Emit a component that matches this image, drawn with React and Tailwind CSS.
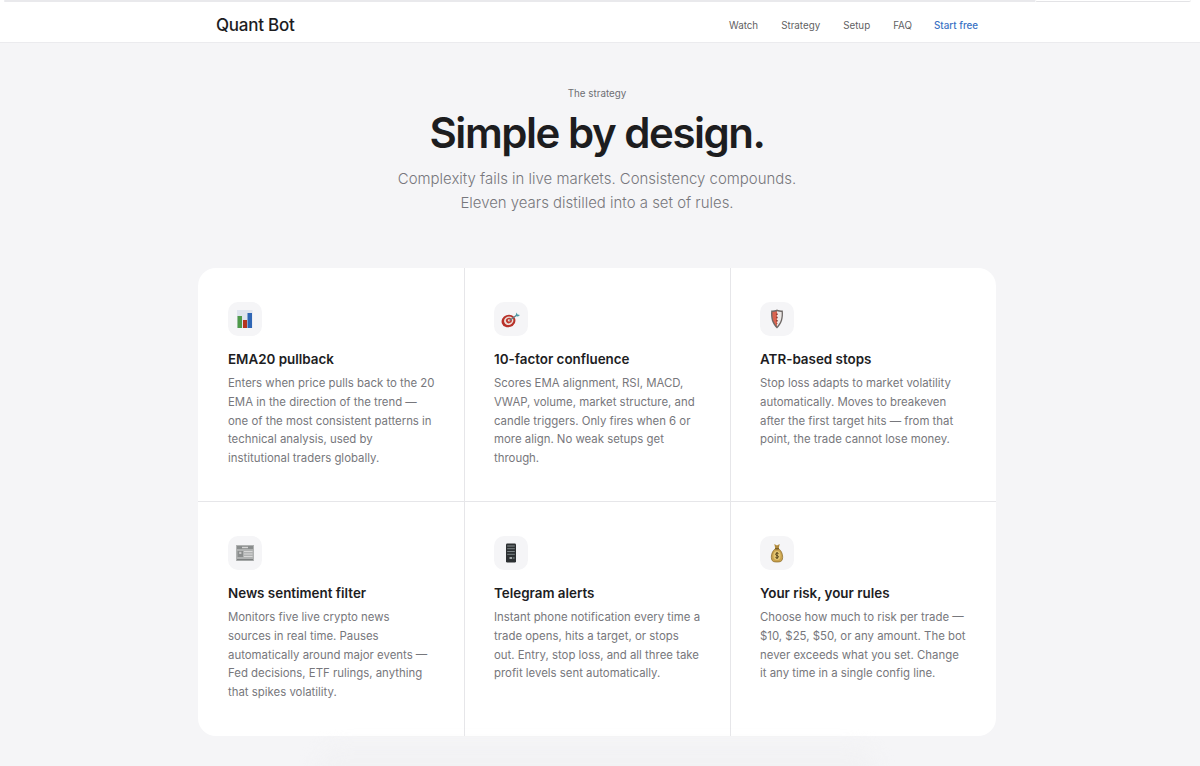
import React from 'react';

const BarsIcon = () => (
  <svg width="18" height="18" viewBox="0 0 18 18">
    <rect x="1" y="0" width="15.5" height="18" fill="#dfe4ee" />
    <rect x="1.5" y="6" width="4.5" height="12" fill="#4f9a4a" />
    <rect x="7" y="10" width="4" height="8" fill="#b5351f" />
    <rect x="11.5" y="3" width="4.5" height="15" fill="#2f66b5" />
  </svg>
);

const TargetIcon = () => (
  <svg width="20" height="20" viewBox="0 0 20 20">
    <g transform="rotate(-20 7.5 12)">
      <ellipse cx="7.5" cy="12" rx="7" ry="6.2" fill="#b8322a" />
      <ellipse cx="7.8" cy="11.8" rx="4.7" ry="4.2" fill="#eadfd9" />
      <ellipse cx="8" cy="11.7" rx="3" ry="2.7" fill="#c23a30" />
      <ellipse cx="8.2" cy="11.6" rx="1.2" ry="1.1" fill="#eadfd9" />
    </g>
    <path d="M8.5 11.5 L16 6" stroke="#5b7f86" strokeWidth="1.1" />
    <path d="M15.5 3.5 L16.5 5.5 L19 6 L17 7.5 L14.5 7 Z" fill="#4a9aa6" />
  </svg>
);

const ShieldIcon = () => (
  <svg width="18" height="20" viewBox="0 0 18 20">
    <path d="M3.2 1.5 C5.5 1.5 7.5 1.2 9 0.5 C10.5 1.2 12.5 1.5 14.8 1.5 C15.6 9 14 15 9 19.5 C4 15 2.4 9 3.2 1.5 Z" fill="#6f6967" />
    <path d="M4.4 3 C6 3 7.6 2.8 9 2.2 L9 17.5 C5.5 14 3.9 9 4.4 3 Z" fill="#d9634f" />
    <path d="M9 2.2 C10.4 2.8 12 3 13.6 3 C14.1 9 12.5 14 9 17.5 Z" fill="#ece8e6" />
    <path d="M9 4.5 V14.5" stroke="#7d2f27" strokeWidth="1.3" strokeDasharray="1.6 1.6" />
  </svg>
);

const NewsIcon = () => (
  <svg width="18" height="18" viewBox="0 0 18 18">
    <rect x="0" y="1" width="18" height="16" fill="#b0b2b2" />
    <rect x="1" y="2" width="16" height="3" fill="#8a8d8d" />
    <rect x="6" y="2.8" width="6" height="1.4" fill="#d6d6d6" />
    <rect x="1.5" y="7" width="5.5" height="6" fill="#8a8d8d" />
    <rect x="3.2" y="7.8" width="2.2" height="2.2" fill="#c9c9c9" />
    <rect x="8" y="7" width="8.5" height="1" fill="#d8d8d8" />
    <rect x="8" y="9.5" width="8.5" height="1" fill="#d8d8d8" />
    <rect x="8" y="12" width="8.5" height="1" fill="#d8d8d8" />
    <rect x="1" y="15" width="16" height="1.2" fill="#7d8080" />
  </svg>
);

const PhoneIcon = () => (
  <svg width="14" height="20" viewBox="0 0 14 20">
    <rect x="2" y="0.5" width="10" height="19" rx="1.2" fill="#2c3032" />
    <rect x="3.2" y="2.5" width="7.6" height="1" fill="#8a9194" />
    <rect x="3.2" y="5.2" width="7.6" height="1" fill="#7b8386" />
    <rect x="3.2" y="8" width="7.6" height="1" fill="#7b8386" />
    <rect x="3.2" y="10.8" width="7.6" height="1" fill="#7b8386" />
    <rect x="5.5" y="14" width="2.6" height="2" fill="#a0a6a8" />
    <rect x="8.8" y="14" width="1.8" height="2" fill="#5d6366" />
  </svg>
);

const BagIcon = () => (
  <svg width="14" height="20" viewBox="0 0 18 20" preserveAspectRatio="none">
    <path d="M5.5 1 L9 2.5 L12.5 1 L11 6 L7 6 Z" fill="#b08a3c" />
    <path d="M7 5.5 H11 C15 8 17 12 16 16 C15.5 18.5 13 19 9 19 C5 19 2.5 18.5 2 16 C1 12 3 8 7 5.5 Z" fill="#c9a24e" stroke="#8a6a28" strokeWidth="0.8" />
    <rect x="6.5" y="5" width="5" height="1.5" fill="#7c5f25" />
    <circle cx="9" cy="12.5" r="4.6" fill="#e3c572" />
    <path d="M11 10.6 C10.4 9.8 7.4 9.7 7.2 11.2 C7 12.8 11 12.2 10.9 13.8 C10.7 15.3 7.7 15.2 7 14.4 M9 9 V16" fill="none" stroke="#4c3a14" strokeWidth="1" />
  </svg>
);

const features = [
  {
    icon: <BarsIcon />,
    title: 'EMA20 pullback',
    body: 'Enters when price pulls back to the 20 EMA in the direction of the trend — one of the most consistent patterns in technical analysis, used by institutional traders globally.',
  },
  {
    icon: <TargetIcon />,
    title: '10-factor confluence',
    body: 'Scores EMA alignment, RSI, MACD, VWAP, volume, market structure, and candle triggers. Only fires when 6 or more align. No weak setups get through.',
  },
  {
    icon: <ShieldIcon />,
    title: 'ATR-based stops',
    body: 'Stop loss adapts to market volatility automatically. Moves to breakeven after the first target hits — from that point, the trade cannot lose money.',
  },
  {
    icon: <NewsIcon />,
    title: 'News sentiment filter',
    body: 'Monitors five live crypto news sources in real time. Pauses automatically around major events — Fed decisions, ETF rulings, anything that spikes volatility.',
  },
  {
    icon: <PhoneIcon />,
    title: 'Telegram alerts',
    body: 'Instant phone notification every time a trade opens, hits a target, or stops out. Entry, stop loss, and all three take profit levels sent automatically.',
  },
  {
    icon: <BagIcon />,
    title: 'Your risk, your rules',
    body: 'Choose how much to risk per trade — $10, $25, $50, or any amount. The bot never exceeds what you set. Change it any time in a single config line.',
  },
];

const links = ['Watch', 'Strategy', 'Setup', 'FAQ'];

export default function App() {
  return (
    <div className="h-[766px] overflow-hidden bg-[#f5f5f7] font-['Inter',sans-serif] text-[#1d1d1f]">
      <div className="flex h-[2px] bg-white pl-[4px]">
        <div className="h-[2px] flex-1 rounded-l-sm bg-[#e9e9ec]" />
        <div className="h-[2px] w-[156px] rounded-b-md border-b border-[#e3e3e6] bg-white" />
        <div className="h-[2px] w-[9px] bg-white" />
      </div>
      <nav className="h-[41px] border-b border-[#ebebee] bg-white">
        <div className="mx-auto flex h-full w-[762px] -translate-x-[3px] items-center justify-between pt-[8px]">
          <span className="text-[17px] font-medium tracking-[-0.25px]">Quant Bot</span>
          <div className="flex items-center gap-[23px] text-[9.8px] text-[#5f5f63]">
            {links.map((l) => (
              <span key={l} className="translate-x-[1px]">{l}</span>
            ))}
            <span className="font-medium text-[#3a72c4]">Start free</span>
          </div>
        </div>
      </nav>

      <header className="flex flex-col items-center pt-[44px]">
        <p className="-translate-x-[3px] text-[9.8px] leading-[14px] text-[#6e6e73]">The strategy</p>
        <h1 className="mt-[4px] -translate-x-[3px] text-[42px] leading-[56px] font-semibold tracking-[-1.47px]">Simple by design.</h1>
        <p className="mt-[6px] -translate-x-[3px] text-center text-[14.95px] leading-[24px] font-light text-[#77777c]">
          Complexity fails in live markets. Consistency compounds.
          <br />
          Eleven years distilled into a set of rules.
        </p>
      </header>

      <section className="mx-auto mt-[53px] grid w-[798px] -translate-x-[3px] grid-cols-3 overflow-hidden rounded-[18px] bg-white">
        {features.map((f, i) => (
          <div
            key={f.title}
            className={
              'flex h-[234px] flex-col pr-[29px] pt-[34px] ' +
              (i % 3 !== 0 ? 'border-l border-[#e6e6e9] pl-[29px] ' : 'pl-[30px] ') +
              (i < 3 ? 'border-b border-[#e6e6e9]' : '')
            }
          >
            <div className="flex h-[34px] w-[34px] items-center justify-center rounded-[10px] bg-[#f5f5f7]">{f.icon}</div>
            <h3 className="mt-[13px] text-[13.4px] leading-[20px] font-semibold">{f.title}</h3>
            <p className="mt-[5px] text-[11.4px] leading-[18.75px] text-[#77777c]">{f.body}</p>
          </div>
        ))}
      </section>

      <div className="mx-auto mt-[10px] h-[40px] w-[560px] -translate-x-[3px] rounded-t-[24px] bg-[#f2f2f4] blur-sm" />
    </div>
  );
}
